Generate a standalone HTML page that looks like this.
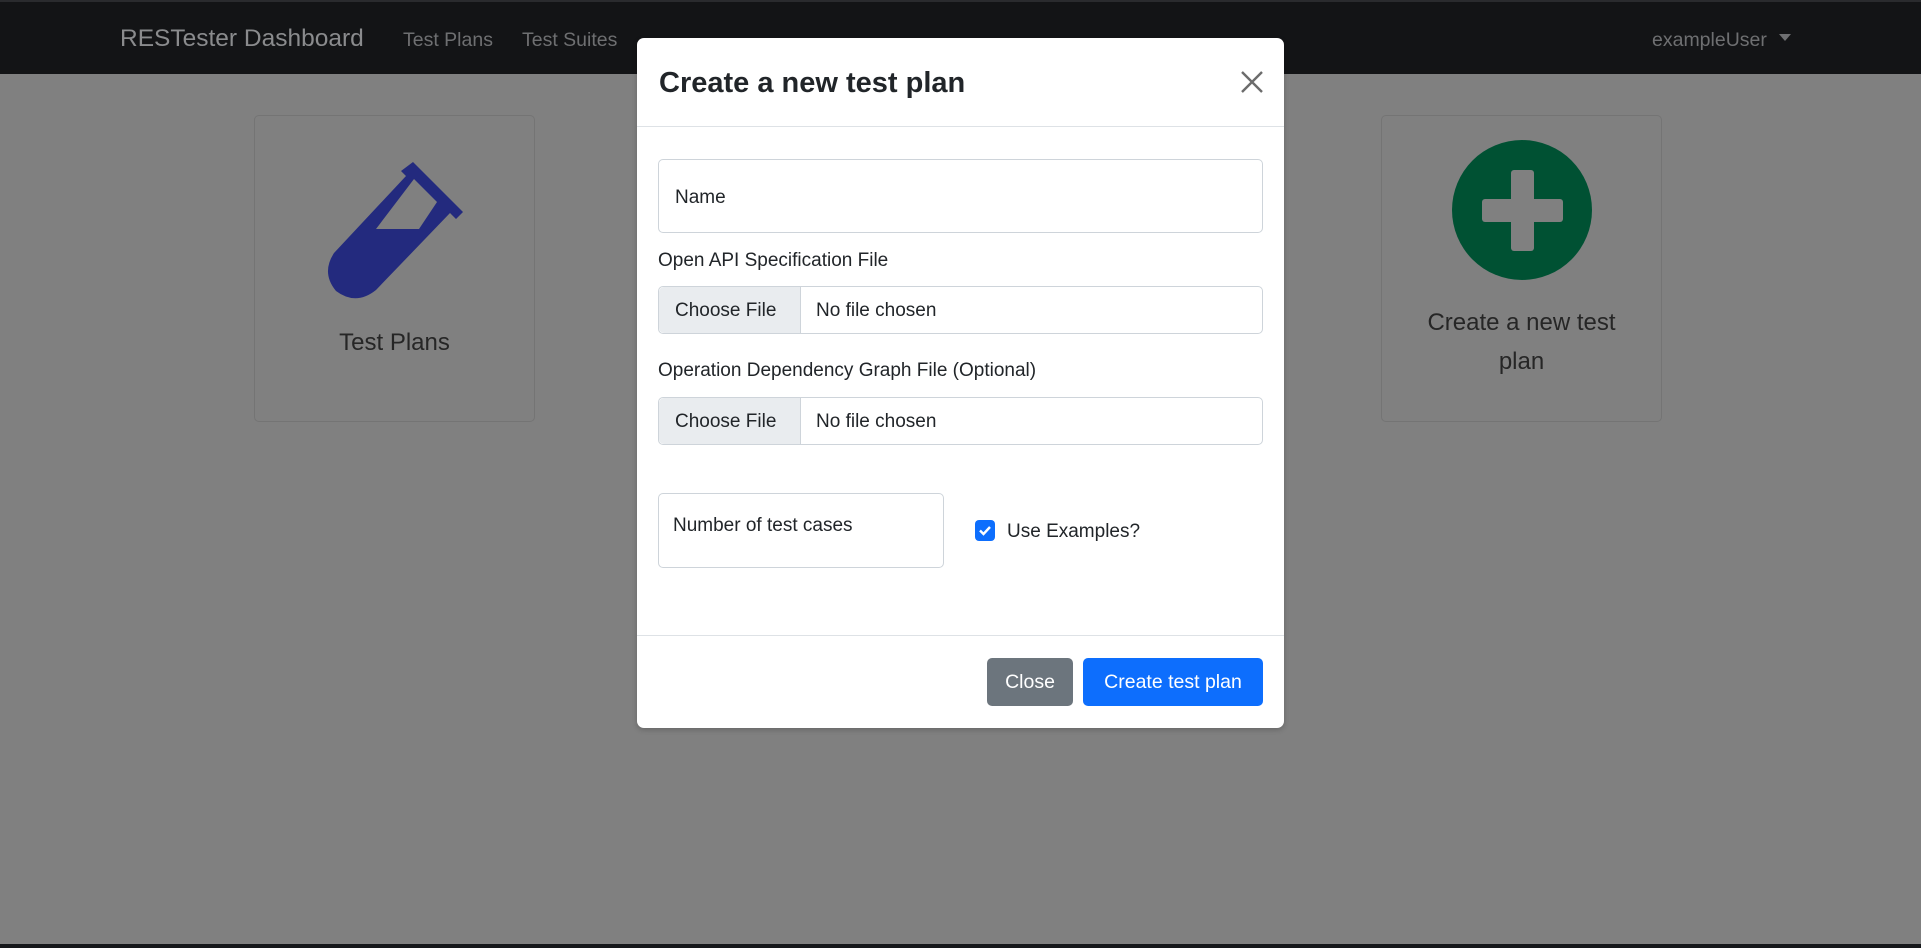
<!DOCTYPE html>
<html><head><meta charset="utf-8"><style>
*{box-sizing:border-box;margin:0;padding:0}
body{width:1921px;height:948px;overflow:hidden;background:#808080;font-family:"Liberation Sans",Arial,sans-serif;position:relative;color:#1b1b1b}
.nav{position:absolute;left:0;top:0;width:1921px;height:74px;background:#131416;border-top:2px solid #2a2b2e}
.nav span{position:absolute;color:#6e6f71;white-space:nowrap}
.card{position:absolute;border:1px solid #747474;border-radius:5px;top:115px;height:307px;width:281px}
.card .t{position:absolute;left:0;width:100%;text-align:center;font-size:24px;color:#262626;line-height:39px}
.modal{position:absolute;left:637px;top:38px;width:647px;height:690px;background:#fff;border-radius:7px;box-shadow:0 2px 6px rgba(0,0,0,.2)}
.abs{position:absolute}
.inp{position:absolute;border:1px solid #ced4da;border-radius:5px;background:#fff}
.lbl{position:absolute;font-size:19px;color:#212529;white-space:nowrap}
.fb{position:absolute;left:0;top:0;bottom:0;width:142px;background:#e9ecef;border-right:1px solid #ced4da;border-radius:5px 0 0 5px;font-size:19px;line-height:48px;padding-left:16px;color:#212529}
.btn{position:absolute;color:#fff;font-size:19.5px;text-align:center;line-height:48px;border-radius:5px;top:620px;height:48px}
</style></head><body>
<div class="nav">
<span style="left:120px;top:23px;font-size:24.5px;color:#8a8b8d">RESTester Dashboard</span>
<span style="left:403px;top:27px;font-size:19.5px">Test Plans</span>
<span style="left:522px;top:27px;font-size:19.5px">Test Suites</span>
<span style="left:1652px;top:27px;font-size:19.5px">exampleUser</span>
<span style="left:1779px;top:32px;width:0;height:0;border-left:6px solid transparent;border-right:6px solid transparent;border-top:7px solid #6e6f71"></span>
</div>
<div class="card" style="left:254px">
<svg class="abs" style="left:0;top:0" width="281" height="307" viewBox="254 115 281 307">
<g fill="#232a7e">
<path d="M412 161 L462 211 L455 218 L449 212 L375 289 Q355 305 335 290 Q320 272 333 252 L405 175 L400 170 Z M413 178 L436 201 L418 228 L375 228 Z" fill-rule="evenodd"/>
</g>
</svg>
<div class="t" style="top:207px">Test Plans</div>
</div>
<div class="card" style="left:1381px">
<svg class="abs" style="left:0;top:0" width="281" height="307" viewBox="1381 115 281 307">
<circle cx="1521" cy="209" r="70" fill="#005133"/>
<rect x="1481" y="198" width="81" height="23" rx="3" fill="#808080"/>
<rect x="1510" y="169" width="23" height="81" rx="3" fill="#808080"/>
</svg>
<div class="t" style="top:187px">Create a new test<br>plan</div>
</div>
<div style="position:absolute;left:0;top:944px;width:1921px;height:4px;background:#15171a"></div>
<div class="modal">
<div class="abs" style="left:22px;top:29px;font-size:29px;font-weight:bold;color:#212529">Create a new test plan</div>
<svg class="abs" style="left:604px;top:33px" width="22" height="22" viewBox="0 0 22 22"><path d="M1 1L21 21M21 1L1 21" stroke="#6c6c6c" stroke-width="2.4"/></svg>
<div class="abs" style="left:0;top:88px;width:647px;height:1px;background:#dee2e6"></div>
<div class="inp" style="left:21px;top:121px;width:605px;height:74px"><span class="lbl" style="left:16px;top:27px">Name</span></div>
<div class="lbl" style="left:21px;top:212px">Open API Specification File</div>
<div class="inp" style="left:21px;top:248px;width:605px;height:48px"><div class="fb">Choose File</div><span class="lbl" style="left:157px;top:13px">No file chosen</span></div>
<div class="lbl" style="left:21px;top:322px">Operation Dependency Graph File (Optional)</div>
<div class="inp" style="left:21px;top:359px;width:605px;height:48px"><div class="fb">Choose File</div><span class="lbl" style="left:157px;top:13px">No file chosen</span></div>
<div class="inp" style="left:21px;top:455px;width:286px;height:75px"><span class="lbl" style="left:14px;top:21px">Number of test cases</span></div>
<svg class="abs" style="left:338px;top:482px" width="20" height="21" viewBox="0 0 20 21"><rect width="20" height="21" rx="4" fill="#0d6efd"/><path d="M5 10.5L8.5 14L15 7" stroke="#fff" stroke-width="2.4" fill="none"/></svg>
<div class="lbl" style="left:370px;top:483px">Use Examples?</div>
<div class="abs" style="left:0;top:597px;width:647px;height:1px;background:#dee2e6"></div>
<div class="btn" style="left:350px;width:86px;background:#6c757d">Close</div>
<div class="btn" style="left:446px;width:180px;background:#0d6efd">Create test plan</div>
</div>
</body></html>
